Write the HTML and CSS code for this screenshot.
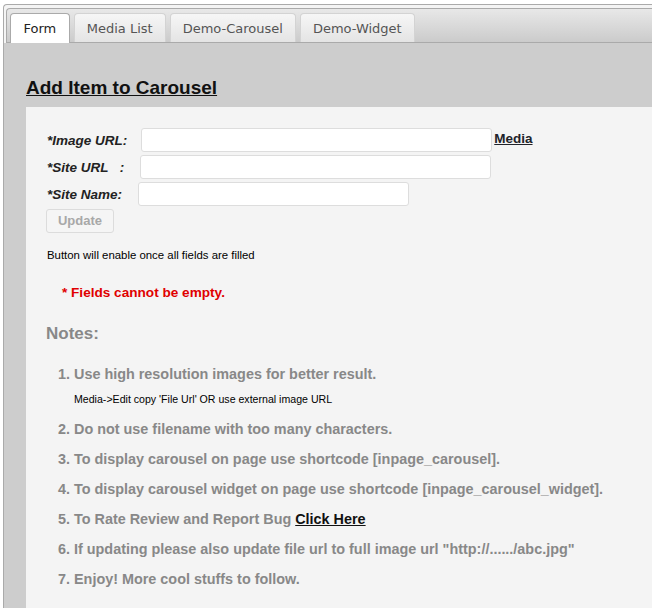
FILE: index.html
```html
<!DOCTYPE html>
<html>
<head>
<meta charset="utf-8">
<link rel="stylesheet" href="styles.css">
</head>
<body>
<div class="tabs">
  <ul class="nav">
    <li class="tab active">Form</li>
    <li class="tab">Media List</li>
    <li class="tab">Demo-Carousel</li>
    <li class="tab">Demo-Widget</li>
  </ul>
  <div class="panel">
    <h2 class="title">Add Item to Carousel</h2>
    <div class="box">
      <div class="row">
        <span class="label">*Image URL:</span>
        <span class="input w1"></span>
        <a class="media">Media</a>
      </div>
      <div class="row">
        <span class="label l2">*Site URL&nbsp;&nbsp;&nbsp;:</span>
        <span class="input w1"></span>
      </div>
      <div class="row">
        <span class="label l3">*Site Name:</span>
        <span class="input w3"></span>
      </div>
      <div class="row">
        <span class="btn">Update</span>
      </div>
      <p class="hint">Button will enable once all fields are filled</p>
      <p class="error">* Fields cannot be empty.</p>
      <h3 class="notes">Notes:</h3>
      <ol class="list">
        <li>Use high resolution images for better result.
          <div class="sub">Media-&gt;Edit copy 'File Url' OR use external image URL</div>
        </li>
        <li>Do not use filename with too many characters.</li>
        <li>To display carousel on page use shortcode [inpage_carousel].</li>
        <li>To display carousel widget on page use shortcode [inpage_carousel_widget].</li>
        <li>To Rate Review and Report Bug <a class="link">Click Here</a></li>
        <li>If updating please also update file url to full image url "http://....../abc.jpg"</li>
        <li>Enjoy! More cool stuffs to follow.</li>
      </ol>
    </div>
  </div>
</div>
</body>
</html>
```

FILE: styles.css
```css
html, body {
  margin: 0;
  padding: 0;
  overflow: hidden;
  background: #ffffff;
}
body {
  font-family: "Liberation Sans", Arial, sans-serif;
  width: 652px;
  height: 608px;
}
.tabs {
  margin: 4px 0 0 3px;
  width: 649px;
  height: 604px;
  box-sizing: border-box;
  border: 1px solid #aaaaaa;
  border-right: none;
  border-bottom: none;
  border-radius: 4px 0 0 0;
  background: #f4f4f4;
  padding: 3px 0 0 0;
  display: flex;
  flex-direction: column;
}
.nav {
  list-style: none;
  margin: 0 0 0 2px;
  padding: 4px 0 0 3px;
  height: 29px;
  border: 1px solid #aaaaaa;
  border-right: none;
  border-radius: 4px 0 0 0;
  background: linear-gradient(#e8e8e8, #cbcbcb);
  display: flex;
  gap: 4px;
}
.tab {
  font-family: "DejaVu Sans", Verdana, sans-serif;
  font-size: 13px;
  color: #555555;
  padding: 0 12px;
  line-height: 29px;
  border: 1px solid #d3d3d3;
  border-bottom: none;
  border-radius: 4px 4px 0 0;
  background: linear-gradient(#f6f6f6, #e4e4e4);
  box-sizing: border-box;
  height: 29px;
  margin-bottom: -1px;
}
.tab.active {
  background: #ffffff;
  color: #222222;
  border-color: #aaaaaa;
  height: 30px;
  padding: 0 12.5px;
}
.panel {
  flex: 1;
  display: flex;
  flex-direction: column;
  background: #cdcdcd;
  padding: 34px 0 0 22px;
}
.title {
  margin: 0 0 8px 0;
  font-size: 19px;
  line-height: 22px;
  font-weight: bold;
  color: #111111;
  text-decoration: underline;
}
.box {
  flex: 1;
  background: #f4f4f4;
  padding: 21px 0 0 21px;
}
.row {
  display: flex;
  align-items: center;
  height: 24px;
  margin-bottom: 3px;
}
.label {
  font-size: 13.5px;
  font-weight: bold;
  font-style: italic;
  color: #222222;
  margin-right: 14px;
  white-space: pre;
}
.l2 { margin-right: 16px; }
.l3 { margin-right: 16px; }
.input {
  display: block;
  height: 24px;
  box-sizing: border-box;
  border: 1px solid #dddddd;
  border-radius: 3px;
  background: #ffffff;
}
.w1 { width: 351px; }
.w3 { width: 271px; }
.media {
  font-size: 13.5px;
  font-weight: bold;
  color: #21232a;
  text-decoration: underline;
  margin-left: 2px;
  align-self: flex-start;
  line-height: 22px;
}
.btn {
  margin-left: -1px;
  width: 68px;
  height: 24px;
  box-sizing: border-box;
  border: 1px solid #dcdcdc;
  border-radius: 3px;
  background: #f5f5f5;
  color: #a8a8a8;
  font-size: 13px;
  font-weight: bold;
  text-align: center;
  line-height: 22px;
}
.hint {
  margin: 15px 0 0 0;
  font-size: 11.4px;
  line-height: 14px;
  color: #000000;
}
.error {
  margin: 23px 0 0 15px;
  font-size: 13.6px;
  line-height: 16px;
  font-weight: bold;
  color: #e00000;
}
.notes {
  margin: 23px 0 0 -1px;
  font-size: 17px;
  line-height: 20px;
  font-weight: bold;
  color: #888888;
}
.list {
  margin: 20px 0 0 0;
  padding-left: 27px;
  color: #888888;
  font-size: 14.4px;
  font-weight: bold;
  line-height: 20px;
}
.list li {
  margin-bottom: 10px;
}
.sub {
  margin: 8px 0 0 0;
  padding-bottom: 3px;
  font-size: 10.6px;
  line-height: 14px;
  color: #000000;
  font-weight: normal;
}
.link {
  color: #111111;
  text-decoration: underline;
}
```
